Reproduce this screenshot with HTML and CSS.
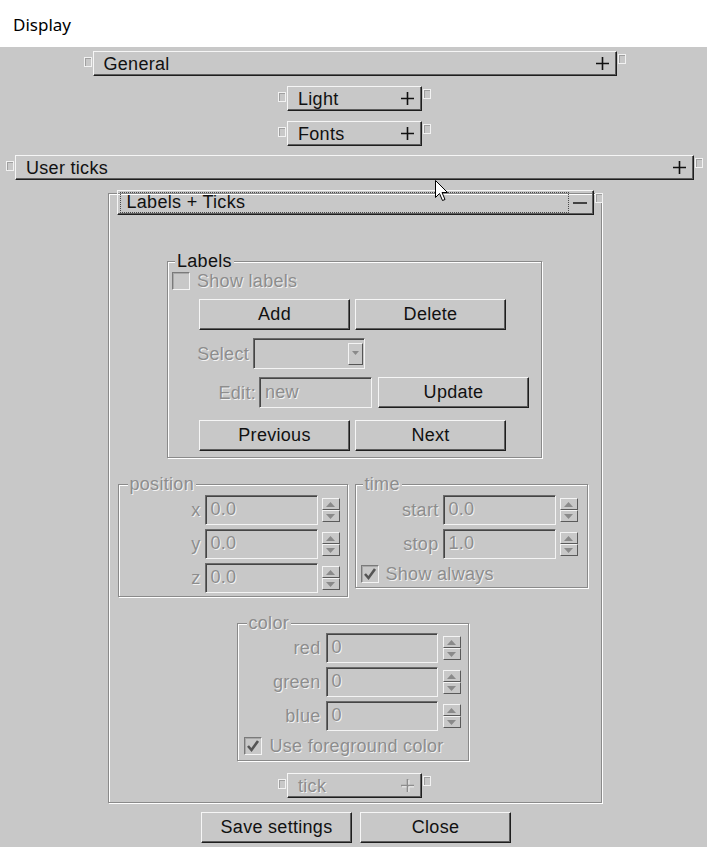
FILE: index.html
```html
<!DOCTYPE html>
<html>
<head>
<meta charset="utf-8">
<link rel="stylesheet" href="styles.css">
</head>
<body>
<div class="titlebar">Display</div>
<div class="client">
  <div class="barrow r-general">
    <span class="handle l"></span>
    <div class="bar w-general"><span class="t">General</span><svg class="plus" width="13" height="13" viewBox="0 0 13 13"><path d="M0 6.5H13M6.5 0V13" stroke="#111" stroke-width="1.6"/></svg></div>
    <span class="handle r"></span>
  </div>
  <div class="barrow r-light">
    <span class="handle l"></span>
    <div class="bar w-small"><span class="t">Light</span><svg class="plus" width="13" height="13" viewBox="0 0 13 13"><path d="M0 6.5H13M6.5 0V13" stroke="#111" stroke-width="1.6"/></svg></div>
    <span class="handle r"></span>
  </div>
  <div class="barrow r-fonts">
    <span class="handle l"></span>
    <div class="bar w-small"><span class="t">Fonts</span><svg class="plus" width="13" height="13" viewBox="0 0 13 13"><path d="M0 6.5H13M6.5 0V13" stroke="#111" stroke-width="1.6"/></svg></div>
    <span class="handle r"></span>
  </div>
  <div class="barrow r-user">
    <span class="handle l"></span>
    <div class="bar w-user"><span class="t">User ticks</span><svg class="plus" width="13" height="13" viewBox="0 0 13 13"><path d="M0 6.5H13M6.5 0V13" stroke="#111" stroke-width="1.6"/></svg></div>
    <span class="handle r"></span>
  </div>

  <div class="lt-frame">
    <div class="barrow lt-row">
      <div class="bar lt-bar"><span class="focus">Labels + Ticks</span><svg class="minus" width="14" height="2" viewBox="0 0 14 2"><path d="M0 1H14" stroke="#222" stroke-width="1.6"/></svg></div>
      <span class="handle r"></span>
    </div>

    <div class="group g-labels">
      <span class="legend">Labels</span>
      <div class="chkrow cr-labels"><span class="chk"></span><span class="dis ctext">Show labels</span></div>
      <div class="btnrow br-1"><button class="btn">Add</button><button class="btn">Delete</button></div>
      <div class="selrow">
        <span class="dis lbl w-sel">Select</span>
        <div class="combo"><span class="cbtn"><svg width="7" height="5" viewBox="0 0 7 5"><path d="M0 0H7L3.5 4Z" fill="#8a8a8a"/></svg></span></div>
      </div>
      <div class="editrow">
        <span class="dis lbl w-edit">Edit:</span>
        <div class="entry e-edit"><span class="dis">new</span></div>
        <button class="btn">Update</button>
      </div>
      <div class="btnrow br-2"><button class="btn">Previous</button><button class="btn">Next</button></div>
    </div>

    <div class="pair">
      <div class="group g-pos">
        <span class="legend dis">position</span>
        <div class="fgrid">
          <span class="dis lbl">x</span><div class="entry"><span class="dis">0.0</span></div><span class="spin"><span class="sb"><svg width="9" height="5" viewBox="0 0 9 5"><path d="M0 5H9L4.5 0Z" fill="#8a8a8a"/></svg></span><span class="sb"><svg width="9" height="5" viewBox="0 0 9 5"><path d="M0 0H9L4.5 5Z" fill="#8a8a8a"/></svg></span></span>
          <span class="dis lbl">y</span><div class="entry"><span class="dis">0.0</span></div><span class="spin"><span class="sb"><svg width="9" height="5" viewBox="0 0 9 5"><path d="M0 5H9L4.5 0Z" fill="#8a8a8a"/></svg></span><span class="sb"><svg width="9" height="5" viewBox="0 0 9 5"><path d="M0 0H9L4.5 5Z" fill="#8a8a8a"/></svg></span></span>
          <span class="dis lbl">z</span><div class="entry"><span class="dis">0.0</span></div><span class="spin"><span class="sb"><svg width="9" height="5" viewBox="0 0 9 5"><path d="M0 5H9L4.5 0Z" fill="#8a8a8a"/></svg></span><span class="sb"><svg width="9" height="5" viewBox="0 0 9 5"><path d="M0 0H9L4.5 5Z" fill="#8a8a8a"/></svg></span></span>
        </div>
      </div>
      <div class="group g-time">
        <span class="legend dis">time</span>
        <div class="fgrid tgrid">
          <span class="dis lbl">start</span><div class="entry"><span class="dis">0.0</span></div><span class="spin"><span class="sb"><svg width="9" height="5" viewBox="0 0 9 5"><path d="M0 5H9L4.5 0Z" fill="#8a8a8a"/></svg></span><span class="sb"><svg width="9" height="5" viewBox="0 0 9 5"><path d="M0 0H9L4.5 5Z" fill="#8a8a8a"/></svg></span></span>
          <span class="dis lbl">stop</span><div class="entry"><span class="dis">1.0</span></div><span class="spin"><span class="sb"><svg width="9" height="5" viewBox="0 0 9 5"><path d="M0 5H9L4.5 0Z" fill="#8a8a8a"/></svg></span><span class="sb"><svg width="9" height="5" viewBox="0 0 9 5"><path d="M0 0H9L4.5 5Z" fill="#8a8a8a"/></svg></span></span>
        </div>
        <div class="chkrow cr-time"><span class="chk"><svg width="14" height="14" viewBox="0 0 14 14"><path d="M2 7L5.5 11L12 2" stroke="#555" stroke-width="2.6" fill="none"/></svg></span><span class="dis ctext">Show always</span></div>
      </div>
    </div>

    <div class="group g-color">
      <span class="legend dis">color</span>
      <div class="fgrid cgrid">
        <span class="dis lbl">red</span><div class="entry"><span class="dis">0</span></div><span class="spin"><span class="sb"><svg width="9" height="5" viewBox="0 0 9 5"><path d="M0 5H9L4.5 0Z" fill="#8a8a8a"/></svg></span><span class="sb"><svg width="9" height="5" viewBox="0 0 9 5"><path d="M0 0H9L4.5 5Z" fill="#8a8a8a"/></svg></span></span>
        <span class="dis lbl">green</span><div class="entry"><span class="dis">0</span></div><span class="spin"><span class="sb"><svg width="9" height="5" viewBox="0 0 9 5"><path d="M0 5H9L4.5 0Z" fill="#8a8a8a"/></svg></span><span class="sb"><svg width="9" height="5" viewBox="0 0 9 5"><path d="M0 0H9L4.5 5Z" fill="#8a8a8a"/></svg></span></span>
        <span class="dis lbl">blue</span><div class="entry"><span class="dis">0</span></div><span class="spin"><span class="sb"><svg width="9" height="5" viewBox="0 0 9 5"><path d="M0 5H9L4.5 0Z" fill="#8a8a8a"/></svg></span><span class="sb"><svg width="9" height="5" viewBox="0 0 9 5"><path d="M0 0H9L4.5 5Z" fill="#8a8a8a"/></svg></span></span>
      </div>
      <div class="chkrow cr-color"><span class="chk"><svg width="14" height="14" viewBox="0 0 14 14"><path d="M2 7L5.5 11L12 2" stroke="#555" stroke-width="2.6" fill="none"/></svg></span><span class="dis ctext">Use foreground color</span></div>
    </div>

    <div class="barrow r-tick">
      <span class="handle l"></span>
      <div class="bar w-small"><span class="t dis">tick</span><svg class="plus" width="13" height="13" viewBox="0 0 13 13"><path d="M1 7.5H14M7.5 1V14" stroke="#fff" stroke-width="1.6"/><path d="M0 6.5H13M6.5 0V13" stroke="#8d8d8d" stroke-width="1.6"/></svg></div>
      <span class="handle r"></span>
    </div>
  </div>

  <div class="bottomrow"><button class="btn">Save settings</button><button class="btn">Close</button></div>

  <svg class="cursor" width="14" height="22" viewBox="0 0 14 22"><path d="M0.5 0.5V17.5L4.5 13.5L7.5 20.5L10 19.5L7 12.5H12.5Z" fill="#fff" stroke="#000" stroke-width="1"/></svg>
</div>
</body>
</html>
```

FILE: styles.css
```css
* { box-sizing: border-box; }
html, body { margin: 0; padding: 0; }
body {
  width: 709px;
  height: 847px;
  overflow: hidden;
  background: #fff;
  font-family: "Liberation Sans", Arial, sans-serif;
  font-size: 18px;
  letter-spacing: 0.3px;
  color: #111;
}
.titlebar {
  height: 47px;
  padding-left: 13px;
  font-family: "Noto Sans", "Open Sans", sans-serif;
  font-size: 17px;
  letter-spacing: 0;
  line-height: 50px;
  color: #000;
  background: #fff;
}
.client {
  position: relative;
  width: 709px;
  height: 800px;
  background: #c8c8c8;
  box-shadow: inset -2px 0 0 #fff;
  display: flex;
  flex-direction: column;
  align-items: center;
  padding-top: 4px;
}
.barrow { display: flex; align-items: flex-start; }
.r-light, .r-fonts { margin-top: 10px; }
.r-user { margin-top: 9px; }
.handle {
  width: 8px;
  height: 10px;
  border: 1px solid #f2f2f2;
  background: #c8c8c8;
  box-shadow: inset 1px 1px 0 #a0a0a0;
}
.handle.l { margin-right: 1px; margin-top: 6px; }
.handle.r { margin-left: 1px; margin-top: 3px; }
.bar {
  height: 25px;
  display: flex;
  align-items: center;
  border: 1px solid;
  border-color: #f6f6f6 #1e1e1e #1e1e1e #f6f6f6;
  box-shadow: inset -1px -1px 0 #5e5e5e;
  padding: 0 7px 0 10px;
  line-height: 20px;
}
.bar .t { flex: 1; white-space: nowrap; }
.w-general { width: 524px; }
.w-small { width: 135px; }
.w-user { width: 679px; }

.lt-frame {
  margin-top: 13px;
  width: 494px;
  border: 1px solid #8a8a8a;
  box-shadow: 1px 1px 0 #fff, inset 1px 1px 0 #fff;
  display: flex;
  flex-direction: column;
  align-items: center;
  padding-bottom: 4px;
}
.lt-row { align-self: flex-start; margin-top: -4px; margin-left: 8px; }
.lt-bar { width: 477px; padding: 0 6px 0 2px; }
.focus {
  flex: 1;
  height: 21px;
  border: 1px dotted #4a4a4a;
  padding-left: 6px;
  line-height: 19px;
  white-space: nowrap;
}
.minus { margin-left: 4px; }

.group {
  border: 1px solid #8a8a8a;
  box-shadow: 1px 1px 0 #fff, inset 1px 1px 0 #fff;
  display: flex;
  flex-direction: column;
}
.legend {
  align-self: flex-start;
  margin: -11px 0 0 7px;
  padding: 0 2px;
  height: 20px;
  line-height: 20px;
  background: #c8c8c8;
  white-space: nowrap;
}
.dis { color: #8d8d8d; text-shadow: 1px 1px 0 #f2f2f2; }

.g-labels { margin-top: 46px; width: 375px; padding-bottom: 6px; }
.chkrow { display: flex; align-items: center; height: 22px; }
.cr-labels { height: 20px; margin-left: 4px; }
.chk {
  width: 18px;
  height: 18px;
  border: 1px solid;
  border-color: #7a7a7a #f4f4f4 #f4f4f4 #7a7a7a;
  box-shadow: inset 1px 1px 0 #a8a8a8;
  display: flex;
  align-items: center;
  justify-content: center;
}
.ctext { margin-left: 7px; line-height: 20px; white-space: nowrap; }
.btnrow { display: flex; gap: 5px; padding-left: 31px; }
.br-1 { margin-top: 8px; }
.br-2 { margin-top: 12px; }
.btn {
  font: inherit;
  letter-spacing: inherit;
  color: #111;
  width: 151px;
  height: 31px;
  padding: 0 0 1px 0;
  line-height: 20px;
  background: #c8c8c8;
  border: 1px solid;
  border-color: #f6f6f6 #1e1e1e #1e1e1e #f6f6f6;
  box-shadow: inset -1px -1px 0 #5e5e5e;
  border-radius: 0;
  text-align: center;
}
.selrow, .editrow { display: flex; align-items: center; }
.selrow { margin-top: 8px; }
.editrow { margin-top: 8px; }
.lbl { text-align: right; line-height: 20px; white-space: nowrap; }
.w-sel { width: 81px; margin-right: 4px; }
.w-edit { width: 88px; margin-right: 3px; }
.combo {
  width: 112px;
  height: 31px;
  border: 1px solid;
  border-color: #6b6b6b #f4f4f4 #f4f4f4 #6b6b6b;
  box-shadow: inset 1px 1px 0 #454545;
  display: flex;
  justify-content: flex-end;
  align-items: center;
  padding-right: 1px;
}
.cbtn {
  width: 15px;
  height: 22px;
  border: 1px solid;
  border-color: #f4f4f4 #555 #555 #f4f4f4;
  display: flex;
  align-items: center;
  justify-content: center;
}
.entry {
  height: 30px;
  border: 1px solid;
  border-color: #6b6b6b #f4f4f4 #f4f4f4 #6b6b6b;
  box-shadow: inset 1px 1px 0 #454545;
  padding-left: 5px;
  line-height: 27px;
  white-space: nowrap;
}
.e-edit { width: 113px; height: 31px; margin-right: 6px; line-height: 28px; }

.pair { display: flex; gap: 7px; align-items: flex-start; margin-top: 26px; margin-right: 4px; }
.g-pos { width: 230px; padding-bottom: 3px; }
.g-pos .legend { margin-left: 9px; }
.g-time { width: 233px; padding-bottom: 2px; }
.fgrid {
  display: grid;
  grid-template-columns: 82px 113px 18px;
  grid-auto-rows: 30px;
  column-gap: 4px;
  row-gap: 4px;
  margin-top: 1px;
  align-items: center;
}
.tgrid { grid-template-columns: 83px 113px 18px; }
.spin {
  width: 18px;
  height: 24px;
  display: flex;
  flex-direction: column;
}
.sb {
  flex: 1;
  border: 1px solid;
  border-color: #f4f4f4 #5a5a5a #5a5a5a #f4f4f4;
  display: flex;
  align-items: center;
  justify-content: center;
}
.cr-time { margin-top: 4px; margin-left: 5px; }
.cr-time .ctext { margin-left: 7px; }

.g-color { width: 232px; margin-top: 26px; margin-right: 4px; padding-bottom: 3px; }
.g-color .legend { margin-left: 9px; }
.cgrid { grid-template-columns: 83px 112px 18px; column-gap: 5px; margin-top: 0; }
.cr-color { margin-top: 4px; margin-left: 6px; }
.cr-color .ctext { margin-left: 8px; }

.r-tick { margin-top: 12px; }

.bottomrow { display: flex; gap: 8px; margin-top: 9px; margin-left: 3px; }

.cursor { position: absolute; left: 435px; top: 133px; }
```
